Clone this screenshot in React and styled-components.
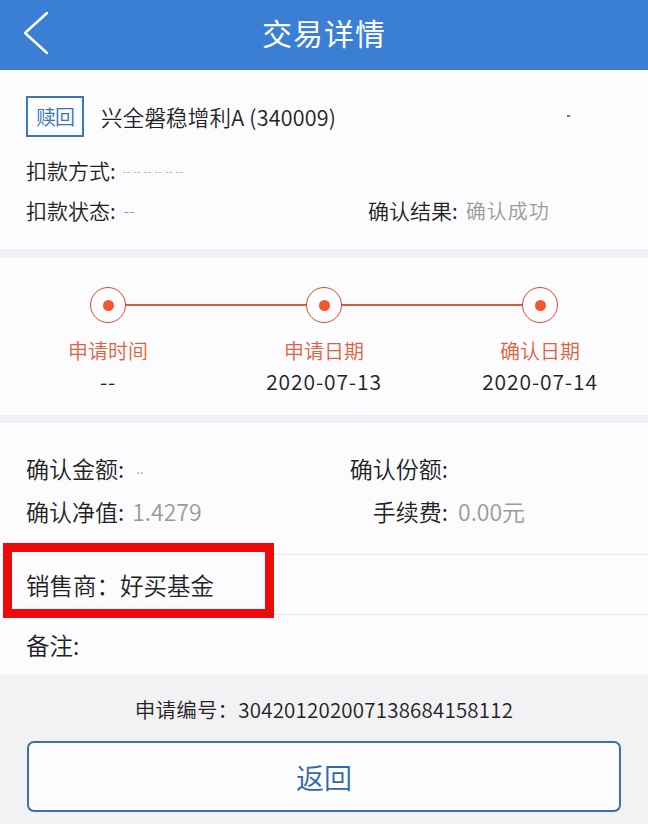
import React from "react";
import styled, { createGlobalStyle } from "styled-components";

const GlobalStyle = createGlobalStyle`
  html, body {
    margin: 0;
    padding: 0;
    background: #f2f2f4;
    font-family: "Noto Sans CJK SC", "Noto Sans", sans-serif;
    font-weight: 350;
    color: #222;
  }
  * {
    box-sizing: border-box;
  }
`;

const Root = styled.div`
  width: 648px;
  min-height: 824px;
  display: flex;
  flex-direction: column;
  background: #f2f2f4;
`;

const Header = styled.header`
  position: relative;
  height: 70px;
  background: #3a7fd4;
  display: flex;
  align-items: center;
  justify-content: center;
`;

const BackButton = styled.button`
  position: absolute;
  left: 18px;
  top: 8px;
  width: 36px;
  height: 50px;
  padding: 0;
  border: none;
  background: transparent;
  display: flex;
  align-items: center;
  justify-content: center;
`;

const HeaderTitle = styled.h1`
  margin: 0;
  font-size: 30px;
  font-weight: 400;
  line-height: 1;
  color: #fff;
  letter-spacing: 1px;
  transform: translateY(-3px);
`;

const Section = styled.section`
  background: #fcfcfe;
  padding: ${({ pad }) => pad};
`;

const Band = styled.div`
  height: ${({ h }) => h}px;
  background: #eef1f6;
`;

const FundRow = styled.div`
  display: flex;
  align-items: center;
  gap: 17px;
  height: 41px;
  position: relative;
`;

const Badge = styled.span`
  width: 58px;
  height: 41px;
  border: 2px solid #3b78b8;
  color: #3673b6;
  font-size: 20px;
  display: flex;
  align-items: center;
  justify-content: center;
  letter-spacing: -1px;
`;

const FundName = styled.span`
  font-size: 21.5px;
  color: #222;
  letter-spacing: 0.2px;
`;

const Speck = styled.span`
  position: absolute;
  left: 541px;
  top: 19px;
  width: 3px;
  height: 2px;
  background: #777;
`;

const InfoRow = styled.div`
  display: grid;
  grid-template-columns: 342px 1fr;
  height: 30px;
  align-items: center;
  margin-top: ${({ mt }) => mt}px;
  font-size: ${({ size }) => size || 21}px;
`;

const Field = styled.div`
  display: flex;
  align-items: center;
  white-space: nowrap;
`;

const Label = styled.span`
  color: #222;
  ${({ width }) => width && `width: ${width}px; text-align: right;`}
`;

const Value = styled.span`
  color: #9a9a9a;
  margin-left: ${({ ml }) => (ml === undefined ? 8 : ml)}px;
  font-size: ${({ size }) => (size ? `${size}px` : "inherit")};
  letter-spacing: ${({ ls }) => ls || 0}px;
`;

const Steps = styled.div`
  display: flex;
  align-items: center;
  padding: 0 90px;
`;

const Node = styled.span`
  width: 36px;
  height: 36px;
  flex-shrink: 0;
  border: 1.5px solid #d34a34;
  border-radius: 50%;
  display: flex;
  align-items: center;
  justify-content: center;

  &::after {
    content: "";
    width: 11px;
    height: 11px;
    border-radius: 50%;
    background: #f2582f;
  }
`;

const Connector = styled.span`
  flex: 1;
  height: 2px;
  background: #d8573f;
`;

const StepGrid = styled.div`
  display: grid;
  grid-template-columns: repeat(3, 216px);
  margin-top: 13px;
`;

const StepCell = styled.div`
  display: flex;
  flex-direction: column;
  align-items: center;
`;

const StepTitle = styled.span`
  font-size: 20px;
  line-height: 30px;
  color: #e2603e;
`;

const StepDate = styled.span`
  font-size: 21px;
  line-height: 30px;
  color: #222;
  letter-spacing: 0.9px;
`;

const DetailSection = styled.section`
  background: #fcfcfe;
  display: flex;
  flex-direction: column;
`;

const DetailGrid = styled.div`
  display: grid;
  grid-template-columns: 320px 1fr;
  row-gap: 9px;
  padding: 28px 0 26px 26px;
  font-size: 23px;
  line-height: 34px;
  border-bottom: 1px solid #e6e8ee;
`;

const LineRow = styled.div`
  position: relative;
  height: 60px;
  display: flex;
  align-items: center;
  padding-left: 26px;
  font-size: 23.5px;
  color: #222;
  border-bottom: ${({ last }) => (last ? "none" : "1px solid #e6e8ee")};
`;

const Highlight = styled.span`
  position: absolute;
  left: 3px;
  top: -12px;
  width: 271px;
  height: 75px;
  border: 9px solid #f00b0b;
  pointer-events: none;
`;

const Footer = styled.footer`
  flex: 1;
  display: flex;
  flex-direction: column;
  align-items: center;
  padding: 21px 27px 12px;
  background: #f2f2f4;
`;

const SerialText = styled.div`
  font-size: 20.5px;
  line-height: 26px;
  color: #222;
  letter-spacing: 0.2px;
`;

const ReturnButton = styled.button`
  margin-top: 19px;
  width: 100%;
  height: 71px;
  border: 2px solid #3d70a7;
  border-radius: 7px;
  background: #fdfdff;
  color: #2f69a8;
  font-family: inherit;
  font-weight: 350;
  font-size: 28px;
  cursor: pointer;
`;

const steps = [
  { title: "申请时间", date: "--" },
  { title: "申请日期", date: "2020-07-13" },
  { title: "确认日期", date: "2020-07-14" },
];

const ChevronLeft = () => (
  <svg width="28" height="44" viewBox="0 0 28 44" fill="none">
    <path d="M25 2 L3 22 L25 42" stroke="#fff" strokeWidth="2.4" strokeLinecap="round" strokeLinejoin="round" />
  </svg>
);

const App = () => (
  <>
    <GlobalStyle />
    <Root>
      <Header>
        <BackButton aria-label="返回">
          <ChevronLeft />
        </BackButton>
        <HeaderTitle>交易详情</HeaderTitle>
      </Header>

      <Section pad="26px 26px 24px">
        <FundRow>
          <Badge>赎回</Badge>
          <FundName>兴全磐稳增利A (340009)</FundName>
          <Speck />
        </FundRow>
        <InfoRow mt={18}>
          <Field>
            <Label>扣款方式:</Label>
            <Value size={10} ml={7} ls={0.5}>-- -- -- -- -- --</Value>
          </Field>
        </InfoRow>
        <InfoRow mt={10}>
          <Field>
            <Label>扣款状态:</Label>
            <Value size={16} ml={8}>--</Value>
          </Field>
          <Field>
            <Label>确认结果:</Label>
            <Value ml={8} size={20} ls={1}>确认成功</Value>
          </Field>
        </InfoRow>
      </Section>

      <Band h={9} />

      <Section pad="29px 0 19px">
        <Steps>
          {steps.map((step, i) => (
            <React.Fragment key={step.title}>
              {i > 0 && <Connector />}
              <Node />
            </React.Fragment>
          ))}
        </Steps>
        <StepGrid>
          {steps.map((step) => (
            <StepCell key={step.title}>
              <StepTitle>{step.title}</StepTitle>
              <StepDate>{step.date}</StepDate>
            </StepCell>
          ))}
        </StepGrid>
      </Section>

      <Band h={8} />

      <DetailSection>
        <DetailGrid>
          <Field>
            <Label>确认金额:</Label>
            <Value size={14} ml={12}>..</Value>
          </Field>
          <Field>
            <Label width={102}>确认份额:</Label>
          </Field>
          <Field>
            <Label>确认净值:</Label>
            <Value ml={8}>1.4279</Value>
          </Field>
          <Field>
            <Label width={102}>手续费:</Label>
            <Value ml={10}>0.00元</Value>
          </Field>
        </DetailGrid>
        <LineRow>
          销售商：好买基金
          <Highlight />
        </LineRow>
        <LineRow last>备注:</LineRow>
      </DetailSection>

      <Footer>
        <SerialText>申请编号：304201202007138684158112</SerialText>
        <ReturnButton>返回</ReturnButton>
      </Footer>
    </Root>
  </>
);

export default App;
